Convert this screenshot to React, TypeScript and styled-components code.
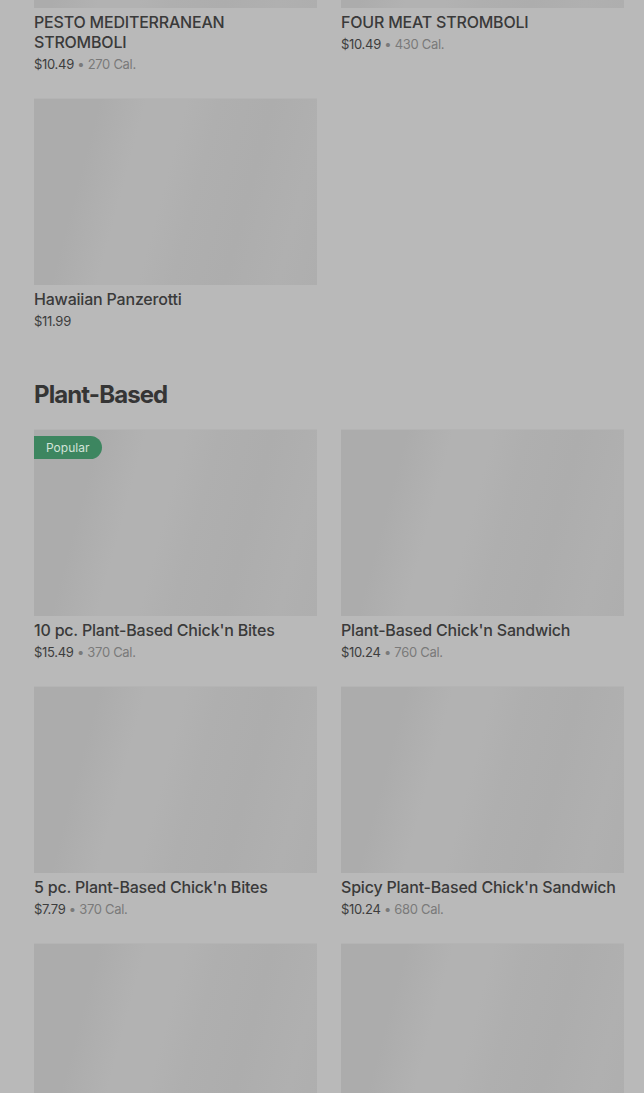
import styled, { createGlobalStyle } from "styled-components";

const GlobalStyle = createGlobalStyle`
  html, body {
    margin: 0;
    padding: 0;
    background-color: #b9b9b9;
    overflow: hidden;
  }
  body {
    font-family: Inter, "Noto Sans", Roboto, sans-serif;
  }
`;

const Page = styled.div`
  padding: 0 20px 0 34px;
  margin-top: -179px;
  height: 1272px;
  overflow: hidden;
`;

const Section = styled.section`
  margin-bottom: 48px;
`;

const SectionTitle = styled.h2`
  margin: 0 0 18px;
  font-size: 24px;
  line-height: 32px;
  font-weight: 700;
  letter-spacing: -0.9px;
  color: #353535;
`;

const Grid = styled.div`
  display: grid;
  grid-template-columns: repeat(2, 283px);
  column-gap: 24px;
  row-gap: 24px;
`;

const Card = styled.div`
  display: flex;
  flex-direction: column;
`;

const Thumb = styled.div`
  position: relative;
  height: 187px;
  background: linear-gradient(
    105deg,
    #acacac 0%,
    #acacac 20%,
    #b2b2b2 34%,
    #b2b2b2 46%,
    #afafaf 56%,
    #adadad 72%,
    #b0b0b0 88%,
    #aeaeae 100%
  );
  box-shadow: inset 0 1px 0 #b4b4b4;
`;

const Badge = styled.span`
  position: absolute;
  top: 7px;
  left: 0;
  height: 23px;
  padding: 0 13px 0 12px;
  display: flex;
  align-items: center;
  background-color: #3d8660;
  color: #d3e3d9;
  font-size: 12px;
  border-radius: 0 12px 12px 0;
`;

const Name = styled.div`
  margin-top: 4px;
  font-size: 16px;
  line-height: 20px;
  font-weight: 500;
  letter-spacing: -0.2px;
  color: #3a3a3a;
`;

const Meta = styled.div`
  margin-top: 2px;
  font-size: 13px;
  line-height: 20px;
  letter-spacing: -0.3px;
  color: #3d3d3d;
`;

const Cal = styled.span`
  color: #7a7a7a;
`;

interface Item {
  id: string;
  name?: string;
  price?: string;
  cal?: string;
  popular?: boolean;
}

const stromboli: Item[] = [
  { id: "s1", name: "PESTO MEDITERRANEAN STROMBOLI", price: "$10.49", cal: "270 Cal." },
  { id: "s2", name: "FOUR MEAT STROMBOLI", price: "$10.49", cal: "430 Cal." },
  { id: "s3", name: "Hawaiian Panzerotti", price: "$11.99" },
];

const plantBased: Item[] = [
  { id: "p1", name: "10 pc. Plant-Based Chick'n Bites", price: "$15.49", cal: "370 Cal.", popular: true },
  { id: "p2", name: "Plant-Based Chick'n Sandwich", price: "$10.24", cal: "760 Cal." },
  { id: "p3", name: "5 pc. Plant-Based Chick'n Bites", price: "$7.79", cal: "370 Cal." },
  { id: "p4", name: "Spicy Plant-Based Chick'n Sandwich", price: "$10.24", cal: "680 Cal." },
  { id: "p5" },
  { id: "p6" },
];

function MenuCard({ item }: { item: Item }) {
  return (
    <Card>
      <Thumb>{item.popular && <Badge>Popular</Badge>}</Thumb>
      {item.name && <Name>{item.name}</Name>}
      {item.price && (
        <Meta>
          {item.price}
          {item.cal && <Cal> • {item.cal}</Cal>}
        </Meta>
      )}
    </Card>
  );
}

export default function App() {
  return (
    <>
      <GlobalStyle />
      <Page>
        <Section>
          <Grid>
            {stromboli.map((item) => (
              <MenuCard key={item.id} item={item} />
            ))}
          </Grid>
        </Section>
        <Section>
          <SectionTitle>Plant-Based</SectionTitle>
          <Grid>
            {plantBased.map((item) => (
              <MenuCard key={item.id} item={item} />
            ))}
          </Grid>
        </Section>
      </Page>
    </>
  );
}
